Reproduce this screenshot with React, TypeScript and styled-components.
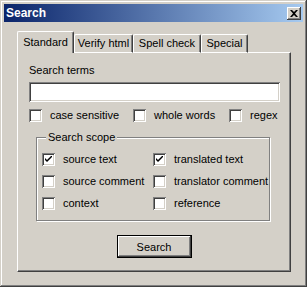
import React from 'react';
import styled, { createGlobalStyle } from 'styled-components';

const GlobalStyle = createGlobalStyle`
  html, body {
    margin: 0;
    padding: 0;
    background: #d4d0c8;
  }
  body {
    font-family: "Liberation Sans", Arial, sans-serif;
    font-size: 11px;
    color: #000;
  }
`;

const tabs = [
  { label: 'Standard', width: 57 },
  { label: 'Verify html', width: 59 },
  { label: 'Spell check', width: 68 },
  { label: 'Special', width: 47 },
];

const scope = [
  { label: 'source text', checked: true },
  { label: 'translated text', checked: true },
  { label: 'source comment', checked: false },
  { label: 'translator comment', checked: false },
  { label: 'context', checked: false },
  { label: 'reference', checked: false },
];

const CheckBox: React.FC<{ checked?: boolean }> = ({ checked }) => (
  <Box>
    {checked && (
      <svg width="7" height="7" viewBox="0 0 7 7">
        <path d="M0 2 L0 4 L2 6 L7 1 L7 -1 L2 4 Z" fill="#000" />
      </svg>
    )}
  </Box>
);

export default function App() {
  return (
    <>
      <GlobalStyle />
      <Window>
        <TitleBar>
          <Title>Search</Title>
          <CloseButton>
            <svg width="8" height="7" viewBox="0 0 8 7">
              <path d="M0 0h2l2 2 2-2h2L5 3.5 8 7H6L4 5 2 7H0l3-3.5z" fill="#000" />
            </svg>
          </CloseButton>
        </TitleBar>
        <Body>
          <TabStrip>
            {tabs.map((t, i) => (
              <Tab key={t.label} $active={i === 0} $width={t.width}>
                {t.label}
              </Tab>
            ))}
          </TabStrip>
          <Panel>
            <FieldLabel>Search terms</FieldLabel>
            <TextInput />
            <OptionRow>
              <Option>
                <CheckBox />
                <span>case sensitive</span>
              </Option>
              <Option>
                <CheckBox />
                <span>whole words</span>
              </Option>
              <Option>
                <CheckBox />
                <span>regex</span>
              </Option>
            </OptionRow>
            <GroupBox>
              <GroupTitle>Search scope</GroupTitle>
              <ScopeGrid>
                {scope.map((s) => (
                  <Option key={s.label}>
                    <CheckBox checked={s.checked} />
                    <span>{s.label}</span>
                  </Option>
                ))}
              </ScopeGrid>
            </GroupBox>
            <ButtonRow>
              <DefaultButton>Search</DefaultButton>
            </ButtonRow>
          </Panel>
        </Body>
      </Window>
    </>
  );
}

const Window = styled.div`
  width: 307px;
  height: 287px;
  box-sizing: border-box;
  padding: 4px;
  background: #d4d0c8;
  box-shadow: inset -1px -1px #404040, inset 1px 1px #d4d0c8, inset -2px -2px #808080,
    inset 2px 2px #ffffff;
  display: flex;
  flex-direction: column;
`;

const TitleBar = styled.div`
  height: 18px;
  display: flex;
  align-items: center;
  justify-content: space-between;
  padding: 0 2px 0 2px;
  background: linear-gradient(to right, #0a246a, #a6caf0);
`;

const Title = styled.span`
  color: #fff;
  font-weight: bold;
  font-size: 12px;
  line-height: 14px;
`;

const CloseButton = styled.div`
  width: 14px;
  height: 13px;
  box-sizing: border-box;
  display: flex;
  align-items: center;
  justify-content: center;
  background: #d4d0c8;
  box-shadow: inset -1px -1px #404040, inset 1px 1px #ffffff, inset -2px -2px #808080;
`;

const Body = styled.div`
  padding: 9px 0 0 13px;
`;

const TabStrip = styled.div`
  display: flex;
  align-items: flex-end;
  height: 21px;
`;

const Tab = styled.div<{ $active?: boolean; $width: number }>`
  position: relative;
  z-index: ${({ $active }) => ($active ? 2 : 1)};
  width: ${({ $width }) => $width}px;
  height: ${({ $active }) => ($active ? 22 : 19)}px;
  margin-bottom: -1px;
  box-sizing: border-box;
  display: flex;
  align-items: center;
  justify-content: center;
  padding-bottom: ${({ $active }) => ($active ? 2 : 1)}px;
  background: #d4d0c8;
  border-top: 1px solid #fff;
  border-left: 1px solid #fff;
  border-right: 1px solid #404040;
  border-bottom: ${({ $active }) => ($active ? 'none' : '1px solid #fff')};
  border-radius: 2px 2px 0 0;
  box-shadow: inset -1px 0 #808080;
`;

const Panel = styled.div`
  width: 274px;
  box-sizing: border-box;
  display: flex;
  flex-direction: column;
  padding: 11px 0 13px 11px;
  border-top: 1px solid #fff;
  border-left: 1px solid #fff;
  border-right: 1px solid #404040;
  border-bottom: 1px solid #404040;
  box-shadow: inset -1px -1px #808080;
`;

const FieldLabel = styled.div`
  line-height: 13px;
`;

const TextInput = styled.div`
  margin-top: 5px;
  width: 251px;
  height: 20px;
  box-sizing: border-box;
  background: #fff;
  box-shadow: inset 1px 1px #808080, inset -1px -1px #ffffff, inset 2px 2px #404040,
    inset -2px -2px #d4d0c8;
`;

const OptionRow = styled.div`
  margin-top: 7px;
  display: grid;
  grid-template-columns: 104px 96px auto;
`;

const Option = styled.div`
  display: flex;
  align-items: center;
  gap: 8px;
  height: 13px;
  line-height: 13px;
  white-space: nowrap;
`;

const Box = styled.div`
  width: 13px;
  height: 13px;
  flex: none;
  box-sizing: border-box;
  display: flex;
  align-items: center;
  justify-content: center;
  background: #fff;
  box-shadow: inset 1px 1px #808080, inset -1px -1px #ffffff, inset 2px 2px #404040,
    inset -2px -2px #d4d0c8;
`;

const GroupBox = styled.div`
  margin: 15px 0 0 7px;
  width: 234px;
  box-sizing: border-box;
  display: flex;
  flex-direction: column;
  align-items: flex-start;
  padding: 0 0 10px 5px;
  border: 1px solid #808080;
  box-shadow: 1px 1px #ffffff, inset 1px 1px #ffffff;
`;

const GroupTitle = styled.div`
  margin: -7px 0 0 4px;
  padding: 0 2px;
  line-height: 13px;
  background: #d4d0c8;
`;

const ScopeGrid = styled.div`
  margin-top: 9px;
  display: grid;
  grid-template-columns: 111px auto;
  row-gap: 9px;
`;

const ButtonRow = styled.div`
  margin-top: 14px;
  display: flex;
  justify-content: center;
  padding-right: 11px;
`;

const DefaultButton = styled.div`
  width: 75px;
  height: 23px;
  box-sizing: border-box;
  display: flex;
  align-items: center;
  justify-content: center;
  border: 1px solid #000;
  background: #d4d0c8;
  box-shadow: inset -1px -1px #404040, inset 1px 1px #ffffff, inset -2px -2px #808080;
`;
